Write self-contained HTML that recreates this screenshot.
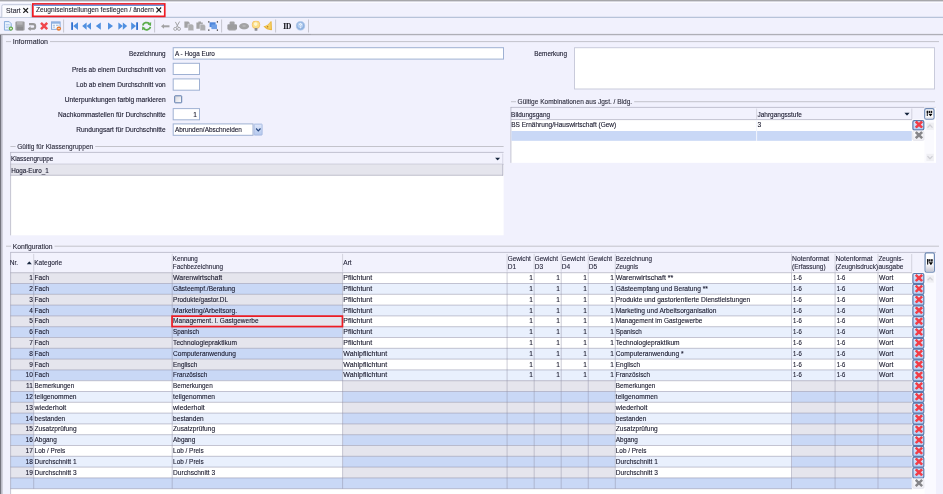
<!DOCTYPE html>
<html lang="de"><head><meta charset="utf-8"><title>Zeugniseinstellungen festlegen / ändern</title><style>
html,body{margin:0;padding:0;}
body{width:943px;height:494px;overflow:hidden;background:#f1f1fd;position:relative;font-family:"Liberation Sans",sans-serif;}
#r{position:absolute;left:0;top:0;width:943px;height:494px;overflow:hidden;}
#g{position:absolute;left:0;top:0;display:block;}
.L{position:absolute;left:0;top:0;width:943px;height:494px;will-change:transform;}
.t{position:absolute;white-space:nowrap;line-height:10px;height:10px;font-size:7.9px;color:#16162a;transform-origin:0 50%;-webkit-text-stroke:0.12px currentColor;}
.r{width:300px;text-align:right;transform-origin:100% 50%;}
</style></head><body><div id="r">
<svg id="g" width="943" height="494" viewBox="0 0 943 494"><defs><linearGradient id="g0" x1="0" y1="0" x2="1" y2="1"><stop offset="0" stop-color="#d4d4dc"/><stop offset="1" stop-color="#ffffff"/></linearGradient><linearGradient id="g1" x1="0" y1="0" x2="0" y2="1"><stop offset="0" stop-color="#dfe8fb"/><stop offset="1" stop-color="#b4c8ee"/></linearGradient><linearGradient id="g2" x1="0" y1="0" x2="0" y2="1"><stop offset="0" stop-color="#ffffff"/><stop offset="1" stop-color="#ffffff"/></linearGradient><linearGradient id="g3" x1="0" y1="0" x2="0" y2="1"><stop offset="0" stop-color="#f6f6fa"/><stop offset="1" stop-color="#dcdde6"/></linearGradient><linearGradient id="g4" x1="0" y1="0" x2="0" y2="1"><stop offset="0" stop-color="#dcebfd"/><stop offset="1" stop-color="#b4cef4"/></linearGradient><linearGradient id="g5" x1="0" y1="0" x2="0" y2="1"><stop offset="0" stop-color="#ffffff"/><stop offset="1" stop-color="#ededf3"/></linearGradient><linearGradient id="g6" x1="0" y1="0" x2="0" y2="1"><stop offset="0" stop-color="#f4f4f8"/><stop offset="1" stop-color="#c6c7d3"/></linearGradient></defs>
<rect x="0" y="0" width="943" height="1.2" fill="#a6a6aa"/>
<rect x="0" y="1.2" width="943" height="0.6" fill="#c4c4cc"/>
<rect x="0" y="1.8" width="943" height="1.2" fill="#fafaff"/>
<rect x="0" y="16.8" width="943" height="1" fill="#a9b7d0"/>
<path d="M1.8 17.3V6.3Q1.8 4.7 3.4 4.7H31.3V17.3" fill="#fbfbfe" stroke="#c0c7d9" stroke-width="1"/>
<svg x="22.7" y="7.4" width="6" height="6" viewBox="0 0 6 6"><path d="M0.6 0.6L5.4 5.4M5.4 0.6L0.6 5.4" stroke="#1c1c1c" stroke-width="1.15" fill="none"/></svg>
<rect x="32.85" y="3.95" width="131.9" height="12.4" fill="#ffffff" stroke="#ee1c24" stroke-width="1.7"/>
<rect x="33.6" y="4.7" width="130.4" height="1.2" fill="#5a88da"/>
<svg x="155.8" y="6.9" width="6" height="6" viewBox="0 0 6 6"><path d="M0.6 0.6L5.4 5.4M5.4 0.6L0.6 5.4" stroke="#1c1c1c" stroke-width="1.15" fill="none"/></svg>
<rect x="0" y="33.9" width="311" height="1" fill="#96969e"/>
<rect x="311" y="33.9" width="632" height="1" fill="#a2a2aa"/>
<rect x="0" y="34.9" width="943" height="0.8" fill="#dcdce6"/>
<rect x="63.1" y="19.5" width="1" height="13" fill="#c6c6d0"/>
<rect x="154.1" y="19.5" width="1" height="13" fill="#c6c6d0"/>
<rect x="221.1" y="19.5" width="1" height="13" fill="#c6c6d0"/>
<rect x="275.1" y="19.5" width="1" height="13" fill="#c6c6d0"/>
<rect x="308" y="19.5" width="1" height="13" fill="#c6c6d0"/>
<rect x="0" y="35" width="1.4" height="459" fill="#74747e"/>
<rect x="1.4" y="35" width="1.2" height="459" fill="#b9b9c6"/>
<svg x="3.60" y="21.10" width="10" height="10" viewBox="0 0 10 10"><path d="M0.8 0.5H5.6L7.6 2.6V9H0.8Z" fill="#e9f2fd" stroke="#7aa3d8" stroke-width="0.9"/><path d="M2.2 3.4H6M2.2 5H6M2.2 6.4H5" stroke="#a9c6ec" stroke-width="0.7"/><circle cx="7.3" cy="7.5" r="2.1" fill="#5aa53c"/><path d="M6.2 7.5H8.4M7.3 6.4V8.6" stroke="#fff" stroke-width="0.7"/></svg>
<svg x="15.00" y="21.10" width="10" height="10" viewBox="0 0 10 10"><rect x="0.4" y="0.4" width="9.2" height="9" rx="1" fill="#9c9c9e"/><rect x="2" y="0.6" width="5.6" height="3" fill="#b4b4b6"/><rect x="2" y="5.6" width="6" height="3.6" fill="#8c8c8e"/></svg>
<svg x="27.60" y="21.90" width="9" height="9" viewBox="0 0 9 9"><path d="M1.4 2.2H5.4A2.3 2.3 0 0 1 5.4 6.8H2" fill="none" stroke="#98989a" stroke-width="2.1"/><path d="M0 6.8L3 4.4V9Z" fill="#98989a"/></svg>
<svg x="39.80" y="21.70" width="8.6" height="8.6" viewBox="0 0 8.6 8.6"><path d="M1.2 1.2L7.4 7.4M7.4 1.2L1.2 7.4" stroke="#f0464d" stroke-width="2.5"/></svg>
<svg x="51.00" y="21.10" width="10.4" height="10" viewBox="0 0 10.4 10"><rect x="0.5" y="0.8" width="8.6" height="7.4" fill="#f4f8fe" stroke="#7fa4d8" stroke-width="0.9"/><rect x="0.5" y="0.8" width="8.6" height="1.8" fill="#8fb2e2"/><path d="M1.8 4.2H4M5 4.2H7.6M1.8 6H4" stroke="#8fa8cc" stroke-width="0.8"/><circle cx="7.8" cy="7.5" r="2.2" fill="#e8772a"/><path d="M6.7 7.5H8.9" stroke="#fff" stroke-width="0.7"/></svg>
<svg x="71.00" y="21.90" width="8" height="8.4" viewBox="0 0 8 8.4"><rect x="0.2" y="0.4" width="1.8" height="7.6" fill="#2f6fcf"/><path d="M7 0.4V8L2.2 4.2Z" fill="#4f8fe0"/></svg>
<svg x="82.00" y="21.90" width="10" height="8.4" viewBox="0 0 10 8.4"><path d="M4.6 0.6V7.8L0.2 4.2Z" fill="#4f8fe0"/><path d="M9 0.6V7.8L4.6 4.2Z" fill="#4f8fe0"/></svg>
<svg x="95.40" y="21.90" width="6" height="8.4" viewBox="0 0 6 8.4"><path d="M5.4 0.6V7.8L0.4 4.2Z" fill="#4f8fe0"/></svg>
<svg x="107.60" y="21.90" width="6" height="8.4" viewBox="0 0 6 8.4"><path d="M0.4 0.6V7.8L5.4 4.2Z" fill="#4f8fe0"/></svg>
<svg x="117.80" y="21.90" width="10" height="8.4" viewBox="0 0 10 8.4"><path d="M0.6 0.6V7.8L5 4.2Z" fill="#4f8fe0"/><path d="M5 0.6V7.8L9.4 4.2Z" fill="#4f8fe0"/></svg>
<svg x="130.80" y="21.90" width="8" height="8.4" viewBox="0 0 8 8.4"><rect x="5.4" y="0.4" width="1.8" height="7.6" fill="#2f6fcf"/><path d="M0.4 0.4V8L5.2 4.2Z" fill="#4f8fe0"/></svg>
<svg x="141.40" y="21.10" width="10.4" height="10" viewBox="0 0 10.4 10"><path d="M1.4 4.4A3.8 3.4 0 0 1 8 2.6" fill="none" stroke="#5cad4c" stroke-width="1.8"/><path d="M9.8 1L9.6 4.8L6.2 3.4Z" fill="#5cad4c"/><path d="M9 5.8A3.8 3.4 0 0 1 2.4 7.6" fill="none" stroke="#5cad4c" stroke-width="1.8"/><path d="M0.6 9.2L0.8 5.4L4.2 6.8Z" fill="#5cad4c"/></svg>
<svg x="160.80" y="23.30" width="9" height="6" viewBox="0 0 9 6"><path d="M0.2 3L3.2 0.6V5.4Z" fill="#a2a2a4"/><rect x="2.6" y="2" width="6.2" height="2" fill="#a2a2a4"/></svg>
<svg x="173.00" y="21.10" width="8.4" height="10" viewBox="0 0 8.4 10"><path d="M6.6 0.4L3.2 6.4M2.4 0.8L5.4 6.4" stroke="#a2a2a4" stroke-width="1" fill="none"/><circle cx="2.2" cy="7.8" r="1.5" fill="none" stroke="#a2a2a4" stroke-width="0.9"/><circle cx="6" cy="7.8" r="1.5" fill="none" stroke="#a2a2a4" stroke-width="0.9"/></svg>
<svg x="184.00" y="21.10" width="10.4" height="10" viewBox="0 0 10.4 10"><path d="M0.4 0.4H4.4L5.8 1.8V6.6H0.4Z" fill="#a2a2a4"/><path d="M4 3H8.2L9.8 4.6V9.6H4Z" fill="#aeaeb0" stroke="#f0f0fc" stroke-width="0.5"/></svg>
<svg x="196.00" y="21.10" width="10.4" height="10" viewBox="0 0 10.4 10"><path d="M0.4 1.4H2.4V0.4H5V1.4H6.8V7.6H0.4Z" fill="#a2a2a4"/><path d="M4 3.2H8L9.6 4.8V9.6H4Z" fill="#aeaeb0" stroke="#f0f0fc" stroke-width="0.5"/></svg>
<svg x="208.00" y="21.10" width="10.4" height="10" viewBox="0 0 10.4 10"><rect x="1.6" y="1.2" width="6" height="4.8" fill="#4d86dc"/><rect x="3.4" y="3.4" width="5.6" height="4.6" fill="#6f9fe6"/><rect x="0.2" y="0.2" width="1.2" height="1.2" fill="#222"/><rect x="8.8" y="0.2" width="1.2" height="1.2" fill="#222"/><rect x="0.2" y="8.4" width="1.2" height="1.2" fill="#222"/><rect x="8.8" y="8.4" width="1.2" height="1.2" fill="#222"/></svg>
<svg x="227.00" y="21.10" width="10.4" height="10" viewBox="0 0 10.4 10"><rect x="2.6" y="0.4" width="5" height="3.6" rx="1" fill="#a2a2a4"/><rect x="0.4" y="3.2" width="9.6" height="5.4" rx="1.2" fill="#9c9c9e"/><rect x="1.6" y="7.6" width="7" height="1.8" fill="#a2a2a4"/></svg>
<svg x="239.00" y="22.70" width="10.4" height="7" viewBox="0 0 10.4 7"><ellipse cx="5.1" cy="3.5" rx="4.9" ry="3.2" fill="#a2a2a4"/><ellipse cx="5.1" cy="3.2" rx="1.8" ry="1.1" fill="#b4b4b6"/></svg>
<svg x="251.40" y="20.70" width="9.4" height="10.4" viewBox="0 0 9.4 10.4"><circle cx="4.6" cy="4" r="3.9" fill="#fbe08a" stroke="#f3b75a" stroke-width="0.7"/><circle cx="4.3" cy="3.4" r="1.8" fill="#fff6d2"/><rect x="3.2" y="7.4" width="2.8" height="2.6" rx="0.5" fill="#8e8e92"/></svg>
<svg x="263.00" y="20.70" width="9.6" height="10.4" viewBox="0 0 9.6 10.4"><path d="M8.6 0.6L9 9.4Q4 9.8 0.4 5.6Q5.2 4.8 7.4 0.8Z" fill="#eab53c"/><path d="M7.6 1.6L7.8 8.4Q4.6 8.2 2.2 5.8Q5.6 4.6 7.6 1.6Z" fill="#f5d268"/><circle cx="4.6" cy="6" r="0.8" fill="#b87a1c"/></svg>
<svg x="295.80" y="21.10" width="9.6" height="9.6" viewBox="0 0 9.6 9.6"><circle cx="4.7" cy="4.7" r="4.4" fill="#8fb1e0" stroke="#b4cbea" stroke-width="0.8"/><circle cx="4.5" cy="4.2" r="2.8" fill="#b6cff0"/><path d="M3.6 3.6Q3.7 2.4 4.8 2.5Q5.9 2.7 5.5 3.8Q4.7 4.4 4.7 5.2" stroke="#fff" stroke-width="0.9" fill="none"/><circle cx="4.7" cy="6.6" r="0.55" fill="#fff"/></svg>
<rect x="6" y="41.1" width="5.1" height="1" fill="#c3c3cb"/>
<rect x="50" y="41.1" width="889" height="1" fill="#c3c3cb"/>
<rect x="10.4" y="146" width="5.2" height="1" fill="#c3c3cb"/>
<rect x="95.2" y="146" width="408.4" height="1" fill="#c3c3cb"/>
<rect x="511" y="101.2" width="5" height="1" fill="#c3c3cb"/>
<rect x="634.2" y="101.2" width="300.8" height="1" fill="#c3c3cb"/>
<rect x="6" y="245.7" width="5.1" height="1" fill="#c3c3cb"/>
<rect x="54.5" y="245.7" width="884.5" height="1" fill="#c3c3cb"/>
<rect x="173.2" y="47.7" width="330.3" height="11.4" fill="#ffffff" stroke="#9fb1d3" stroke-width="1"/>
<rect x="173.2" y="63.3" width="26.3" height="11.2" fill="#ffffff" stroke="#9fb1d3" stroke-width="1"/>
<rect x="173.2" y="78.9" width="26.3" height="11.3" fill="#ffffff" stroke="#9fb1d3" stroke-width="1"/>
<rect x="174.7" y="95.8" width="7" height="7" fill="url(#g0)" stroke="#5d7bab" stroke-width="1" rx="0.5"/>
<rect x="173.2" y="108.6" width="26.3" height="11.2" fill="#ffffff" stroke="#9fb1d3" stroke-width="1"/>
<rect x="173.2" y="123.9" width="79.8" height="11.4" fill="#ffffff" stroke="#9fb1d3" stroke-width="1"/>
<rect x="254.1" y="124.1" width="8" height="11" fill="url(#g1)" stroke="#a9bce2" stroke-width="1" rx="0.5"/>
<svg x="255.3" y="127.6" width="6" height="4.4" viewBox="0 0 6 4.4"><path d="M0.8 0.9L3 3.2L5.2 0.9" stroke="#27477f" stroke-width="1.2" fill="none"/></svg>
<rect x="574.5" y="47.7" width="360" height="41.3" fill="#ffffff" stroke="#c9cbdb" stroke-width="1"/>
<rect x="10.4" y="152.2" width="493.2" height="83.1" fill="#ffffff"/>
<rect x="10.4" y="152.2" width="493.2" height="12" fill="#f2f2fd"/>
<rect x="10.4" y="151.9" width="493.2" height="1" fill="rgba(141,141,165,0.5)"/>
<rect x="10.4" y="163.7" width="493.2" height="1" fill="rgba(141,141,165,0.5)"/>
<rect x="10.4" y="164.7" width="492.6" height="10.5" fill="#e5e5ed"/>
<rect x="10.4" y="174.8" width="492.6" height="1" fill="rgba(141,141,165,0.5)"/>
<rect x="10.1" y="152.2" width="1" height="83.1" fill="rgba(141,141,165,0.5)"/>
<rect x="502.3" y="153.5" width="1" height="10" fill="rgba(141,141,165,0.3)"/>
<rect x="502.3" y="164.2" width="1" height="11.4" fill="rgba(141,141,165,0.5)"/>
<svg x="494.9" y="157.5" width="5.4" height="3" viewBox="0 0 5.4 3"><path d="M0 0H5.4L2.7 3Z" fill="#182840"/></svg>
<rect x="510.6" y="107.2" width="425.4" height="55.6" fill="#ffffff"/>
<rect x="510.6" y="107.2" width="401.4" height="12.3" fill="#f2f2fd"/>
<rect x="912" y="107.2" width="23" height="12.3" fill="#f2f2fd"/>
<rect x="510.6" y="106.9" width="413.4" height="1" fill="rgba(141,141,165,0.5)"/>
<rect x="924" y="106.9" width="12" height="1" fill="rgba(141,141,165,0.2)"/>
<rect x="511" y="119.1" width="401" height="1" fill="rgba(141,141,165,0.5)"/>
<rect x="510.4" y="107.2" width="1" height="55.6" fill="rgba(141,141,165,0.5)"/>
<rect x="511.4" y="131" width="400.4" height="9.8" fill="#c9d8f6"/>
<rect x="756.1" y="108.6" width="1" height="10.4" fill="#d6d6e2"/>
<rect x="756.1" y="120.2" width="1" height="20.8" fill="#f2f5fd"/>
<rect x="911.3" y="108.5" width="1" height="10.5" fill="#d2d2de"/>
<svg x="904.2" y="112.6" width="5.6" height="3.2" viewBox="0 0 5.6 3.2"><path d="M0 0H5.6L2.8 3.2Z" fill="#14243c"/></svg>
<rect x="924.4" y="120" width="9.6" height="42.6" fill="#fafafe"/>
<rect x="926.4" y="122.7" width="7.4" height="7.2" fill="#efeff3"/>
<svg x="927.00" y="124.00" width="6" height="4.6" viewBox="0 0 6 4.6"><path d="M0.5 3.6L3 1L5.5 3.6" stroke="#d0d0d6" stroke-width="1.3" fill="none"/></svg>
<rect x="926.4" y="153.8" width="7.4" height="7.2" fill="#efeff3"/>
<svg x="927.00" y="155.10" width="6" height="4.6" viewBox="0 0 6 4.6"><path d="M0.5 1L3 3.6L5.5 1" stroke="#d0d0d6" stroke-width="1.3" fill="none"/></svg>
<rect x="924.7" y="108.6" width="9.3" height="10.6" fill="url(#g2)" stroke="#6f8ab5" stroke-width="1.2" rx="1.6"/>
<rect x="925.4" y="116.5" width="7.9" height="2" fill="url(#g3)"/>
<svg x="926.45" y="110.40" width="6.2" height="6.2" viewBox="0 0 6.2 6.2"><rect x="0.1" y="0.2" width="1.3" height="5.4" fill="#202024"/><rect x="0.1" y="0.2" width="1.6" height="2.4" fill="#101014"/><rect x="2.2" y="0.2" width="1.5" height="2.4" fill="#101014"/><rect x="4.2" y="0.2" width="1.7" height="2.4" fill="#101014"/><path d="M1.9 3.3H6.2L4.05 6.2Z" fill="#000"/></svg>
<rect x="912.9" y="120.6" width="10.9" height="9.2" fill="url(#g4)" stroke="#5c7aac" stroke-width="1.2" rx="1.3"/>
<svg x="914.85" y="120.70" width="8.2" height="7.8" viewBox="0 0 8.2 7.8"><path d="M0.9 0.8L7.3 7M7.3 0.8L0.9 7" stroke="#f23d47" stroke-width="2.5" fill="none"/></svg>
<rect x="912.8" y="131.1" width="11.1" height="9.2" fill="url(#g5)" stroke="#e4e4ec" stroke-width="1" rx="1"/>
<svg x="914.85" y="131.20" width="8.2" height="7.8" viewBox="0 0 8.2 7.8"><path d="M0.9 0.8L7.3 7M7.3 0.8L0.9 7" stroke="#868689" stroke-width="2.5" fill="none"/></svg>
<rect x="10.4" y="252.3" width="925.6" height="241.7" fill="#ffffff"/>
<rect x="10.4" y="252.3" width="901.3" height="20.4" fill="#f2f2fd"/>
<rect x="911.7" y="252.3" width="24.3" height="20.4" fill="#f2f2fd"/>
<rect x="924.6" y="272.7" width="11.4" height="221.3" fill="#fafaff"/>
<rect x="10.4" y="272.7" width="332.2" height="10.8" fill="#e5e5ed"/>
<rect x="342.6" y="272.7" width="569.1" height="10.8" fill="#ffffff"/>
<rect x="10.4" y="283.5" width="332.2" height="10.8" fill="#c9d8f6"/>
<rect x="342.6" y="283.5" width="569.1" height="10.8" fill="#e9f0fd"/>
<rect x="10.4" y="294.3" width="332.2" height="10.8" fill="#e5e5ed"/>
<rect x="342.6" y="294.3" width="569.1" height="10.8" fill="#ffffff"/>
<rect x="10.4" y="305.1" width="332.2" height="10.8" fill="#c9d8f6"/>
<rect x="342.6" y="305.1" width="569.1" height="10.8" fill="#e9f0fd"/>
<rect x="10.4" y="315.9" width="332.2" height="10.8" fill="#e5e5ed"/>
<rect x="342.6" y="315.9" width="569.1" height="10.8" fill="#ffffff"/>
<rect x="10.4" y="326.7" width="332.2" height="10.8" fill="#c9d8f6"/>
<rect x="342.6" y="326.7" width="569.1" height="10.8" fill="#e9f0fd"/>
<rect x="10.4" y="337.5" width="332.2" height="10.8" fill="#e5e5ed"/>
<rect x="342.6" y="337.5" width="569.1" height="10.8" fill="#ffffff"/>
<rect x="10.4" y="348.3" width="332.2" height="10.8" fill="#c9d8f6"/>
<rect x="342.6" y="348.3" width="569.1" height="10.8" fill="#e9f0fd"/>
<rect x="10.4" y="359.1" width="332.2" height="10.8" fill="#e5e5ed"/>
<rect x="342.6" y="359.1" width="569.1" height="10.8" fill="#ffffff"/>
<rect x="10.4" y="369.9" width="332.2" height="10.8" fill="#c9d8f6"/>
<rect x="342.6" y="369.9" width="569.1" height="10.8" fill="#e9f0fd"/>
<rect x="10.4" y="380.7" width="23.3" height="10.8" fill="#e5e5ed"/>
<rect x="33.7" y="380.7" width="308.9" height="10.8" fill="#ffffff"/>
<rect x="342.6" y="380.7" width="272.7" height="10.8" fill="#e5e5ed"/>
<rect x="615.3" y="380.7" width="176.2" height="10.8" fill="#ffffff"/>
<rect x="791.5" y="380.7" width="120.2" height="10.8" fill="#e5e5ed"/>
<rect x="10.4" y="391.5" width="23.3" height="10.8" fill="#c9d8f6"/>
<rect x="33.7" y="391.5" width="308.9" height="10.8" fill="#e9f0fd"/>
<rect x="342.6" y="391.5" width="272.7" height="10.8" fill="#c9d8f6"/>
<rect x="615.3" y="391.5" width="176.2" height="10.8" fill="#e9f0fd"/>
<rect x="791.5" y="391.5" width="120.2" height="10.8" fill="#c9d8f6"/>
<rect x="10.4" y="402.3" width="23.3" height="10.8" fill="#e5e5ed"/>
<rect x="33.7" y="402.3" width="308.9" height="10.8" fill="#ffffff"/>
<rect x="342.6" y="402.3" width="272.7" height="10.8" fill="#e5e5ed"/>
<rect x="615.3" y="402.3" width="176.2" height="10.8" fill="#ffffff"/>
<rect x="791.5" y="402.3" width="120.2" height="10.8" fill="#e5e5ed"/>
<rect x="10.4" y="413.1" width="23.3" height="10.8" fill="#c9d8f6"/>
<rect x="33.7" y="413.1" width="308.9" height="10.8" fill="#e9f0fd"/>
<rect x="342.6" y="413.1" width="272.7" height="10.8" fill="#c9d8f6"/>
<rect x="615.3" y="413.1" width="176.2" height="10.8" fill="#e9f0fd"/>
<rect x="791.5" y="413.1" width="120.2" height="10.8" fill="#c9d8f6"/>
<rect x="10.4" y="423.9" width="23.3" height="10.8" fill="#e5e5ed"/>
<rect x="33.7" y="423.9" width="308.9" height="10.8" fill="#ffffff"/>
<rect x="342.6" y="423.9" width="272.7" height="10.8" fill="#e5e5ed"/>
<rect x="615.3" y="423.9" width="176.2" height="10.8" fill="#ffffff"/>
<rect x="791.5" y="423.9" width="120.2" height="10.8" fill="#e5e5ed"/>
<rect x="10.4" y="434.7" width="23.3" height="10.8" fill="#c9d8f6"/>
<rect x="33.7" y="434.7" width="308.9" height="10.8" fill="#e9f0fd"/>
<rect x="342.6" y="434.7" width="272.7" height="10.8" fill="#c9d8f6"/>
<rect x="615.3" y="434.7" width="176.2" height="10.8" fill="#e9f0fd"/>
<rect x="791.5" y="434.7" width="120.2" height="10.8" fill="#c9d8f6"/>
<rect x="10.4" y="445.5" width="23.3" height="10.8" fill="#e5e5ed"/>
<rect x="33.7" y="445.5" width="308.9" height="10.8" fill="#ffffff"/>
<rect x="342.6" y="445.5" width="272.7" height="10.8" fill="#e5e5ed"/>
<rect x="615.3" y="445.5" width="176.2" height="10.8" fill="#ffffff"/>
<rect x="791.5" y="445.5" width="120.2" height="10.8" fill="#e5e5ed"/>
<rect x="10.4" y="456.3" width="23.3" height="10.8" fill="#c9d8f6"/>
<rect x="33.7" y="456.3" width="308.9" height="10.8" fill="#e9f0fd"/>
<rect x="342.6" y="456.3" width="272.7" height="10.8" fill="#c9d8f6"/>
<rect x="615.3" y="456.3" width="176.2" height="10.8" fill="#e9f0fd"/>
<rect x="791.5" y="456.3" width="120.2" height="10.8" fill="#c9d8f6"/>
<rect x="10.4" y="467.1" width="23.3" height="10.8" fill="#e5e5ed"/>
<rect x="33.7" y="467.1" width="308.9" height="10.8" fill="#ffffff"/>
<rect x="342.6" y="467.1" width="272.7" height="10.8" fill="#e5e5ed"/>
<rect x="615.3" y="467.1" width="176.2" height="10.8" fill="#ffffff"/>
<rect x="791.5" y="467.1" width="120.2" height="10.8" fill="#e5e5ed"/>
<rect x="10.4" y="477.9" width="901.3" height="10.8" fill="#c9d8f6"/>
<rect x="10.4" y="251.9" width="925.6" height="1" fill="rgba(141,141,165,0.5)"/>
<rect x="10.4" y="272.2" width="901.7" height="1" fill="rgba(141,141,165,0.5)"/>
<rect x="10.4" y="283" width="901.7" height="1" fill="rgba(141,141,165,0.5)"/>
<rect x="10.4" y="293.8" width="901.7" height="1" fill="rgba(141,141,165,0.5)"/>
<rect x="10.4" y="304.6" width="901.7" height="1" fill="rgba(141,141,165,0.5)"/>
<rect x="10.4" y="315.4" width="901.7" height="1" fill="rgba(141,141,165,0.5)"/>
<rect x="10.4" y="326.2" width="901.7" height="1" fill="rgba(141,141,165,0.5)"/>
<rect x="10.4" y="337" width="901.7" height="1" fill="rgba(141,141,165,0.5)"/>
<rect x="10.4" y="347.8" width="901.7" height="1" fill="rgba(141,141,165,0.5)"/>
<rect x="10.4" y="358.6" width="901.7" height="1" fill="rgba(141,141,165,0.5)"/>
<rect x="10.4" y="369.4" width="901.7" height="1" fill="rgba(141,141,165,0.5)"/>
<rect x="10.4" y="380.2" width="901.7" height="1" fill="rgba(141,141,165,0.5)"/>
<rect x="10.4" y="391" width="901.7" height="1" fill="rgba(141,141,165,0.5)"/>
<rect x="10.4" y="401.8" width="901.7" height="1" fill="rgba(141,141,165,0.5)"/>
<rect x="10.4" y="412.6" width="901.7" height="1" fill="rgba(141,141,165,0.5)"/>
<rect x="10.4" y="423.4" width="901.7" height="1" fill="rgba(141,141,165,0.5)"/>
<rect x="10.4" y="434.2" width="901.7" height="1" fill="rgba(141,141,165,0.5)"/>
<rect x="10.4" y="445" width="901.7" height="1" fill="rgba(141,141,165,0.5)"/>
<rect x="10.4" y="455.8" width="901.7" height="1" fill="rgba(141,141,165,0.5)"/>
<rect x="10.4" y="466.6" width="901.7" height="1" fill="rgba(141,141,165,0.5)"/>
<rect x="10.4" y="477.4" width="901.7" height="1" fill="rgba(141,141,165,0.5)"/>
<rect x="10.4" y="488.2" width="901.7" height="1" fill="rgba(141,141,165,0.5)"/>
<rect x="10.1" y="252.3" width="1" height="241.7" fill="rgba(141,141,165,0.5)"/>
<rect x="33.2" y="272.7" width="1" height="216" fill="rgba(141,141,165,0.44)"/>
<rect x="33.2" y="253.9" width="1" height="17.8" fill="#d3d3de"/>
<rect x="171.7" y="272.7" width="1" height="216" fill="rgba(141,141,165,0.44)"/>
<rect x="171.7" y="253.9" width="1" height="17.8" fill="#d3d3de"/>
<rect x="342.1" y="272.7" width="1" height="216" fill="rgba(141,141,165,0.44)"/>
<rect x="342.1" y="253.9" width="1" height="17.8" fill="#d3d3de"/>
<rect x="506.6" y="272.7" width="1" height="216" fill="rgba(141,141,165,0.44)"/>
<rect x="506.6" y="253.9" width="1" height="17.8" fill="#d3d3de"/>
<rect x="533.65" y="272.7" width="1" height="216" fill="rgba(141,141,165,0.44)"/>
<rect x="533.65" y="253.9" width="1" height="17.8" fill="#d3d3de"/>
<rect x="560.7" y="272.7" width="1" height="216" fill="rgba(141,141,165,0.44)"/>
<rect x="560.7" y="253.9" width="1" height="17.8" fill="#d3d3de"/>
<rect x="587.75" y="272.7" width="1" height="216" fill="rgba(141,141,165,0.44)"/>
<rect x="587.75" y="253.9" width="1" height="17.8" fill="#d3d3de"/>
<rect x="614.8" y="272.7" width="1" height="216" fill="rgba(141,141,165,0.44)"/>
<rect x="614.8" y="253.9" width="1" height="17.8" fill="#d3d3de"/>
<rect x="791" y="272.7" width="1" height="216" fill="rgba(141,141,165,0.44)"/>
<rect x="791" y="253.9" width="1" height="17.8" fill="#d3d3de"/>
<rect x="834.6" y="272.7" width="1" height="216" fill="rgba(141,141,165,0.44)"/>
<rect x="834.6" y="253.9" width="1" height="17.8" fill="#d3d3de"/>
<rect x="877.5" y="272.7" width="1" height="216" fill="rgba(141,141,165,0.44)"/>
<rect x="877.5" y="253.9" width="1" height="17.8" fill="#d3d3de"/>
<rect x="911.2" y="253.9" width="1" height="17.8" fill="#d3d3de"/>
<svg x="26.6" y="261.3" width="5.4" height="3.2" viewBox="0 0 5.4 3.2"><path d="M0 3.2H5.4L2.7 0Z" fill="#16263e"/></svg>
<rect x="912.9" y="273.5" width="10.9" height="10.1" fill="url(#g4)" stroke="#5c7aac" stroke-width="1.2" rx="1.3"/>
<svg x="914.85" y="274.05" width="8.2" height="7.8" viewBox="0 0 8.2 7.8"><path d="M0.9 0.8L7.3 7M7.3 0.8L0.9 7" stroke="#f23d47" stroke-width="2.5" fill="none"/></svg>
<rect x="912.9" y="284.3" width="10.9" height="10.1" fill="url(#g4)" stroke="#5c7aac" stroke-width="1.2" rx="1.3"/>
<svg x="914.85" y="284.85" width="8.2" height="7.8" viewBox="0 0 8.2 7.8"><path d="M0.9 0.8L7.3 7M7.3 0.8L0.9 7" stroke="#f23d47" stroke-width="2.5" fill="none"/></svg>
<rect x="912.9" y="295.1" width="10.9" height="10.1" fill="url(#g4)" stroke="#5c7aac" stroke-width="1.2" rx="1.3"/>
<svg x="914.85" y="295.65" width="8.2" height="7.8" viewBox="0 0 8.2 7.8"><path d="M0.9 0.8L7.3 7M7.3 0.8L0.9 7" stroke="#f23d47" stroke-width="2.5" fill="none"/></svg>
<rect x="912.9" y="305.9" width="10.9" height="10.1" fill="url(#g4)" stroke="#5c7aac" stroke-width="1.2" rx="1.3"/>
<svg x="914.85" y="306.45" width="8.2" height="7.8" viewBox="0 0 8.2 7.8"><path d="M0.9 0.8L7.3 7M7.3 0.8L0.9 7" stroke="#f23d47" stroke-width="2.5" fill="none"/></svg>
<rect x="912.9" y="316.7" width="10.9" height="10.1" fill="url(#g4)" stroke="#5c7aac" stroke-width="1.2" rx="1.3"/>
<svg x="914.85" y="317.25" width="8.2" height="7.8" viewBox="0 0 8.2 7.8"><path d="M0.9 0.8L7.3 7M7.3 0.8L0.9 7" stroke="#f23d47" stroke-width="2.5" fill="none"/></svg>
<rect x="912.9" y="327.5" width="10.9" height="10.1" fill="url(#g4)" stroke="#5c7aac" stroke-width="1.2" rx="1.3"/>
<svg x="914.85" y="328.05" width="8.2" height="7.8" viewBox="0 0 8.2 7.8"><path d="M0.9 0.8L7.3 7M7.3 0.8L0.9 7" stroke="#f23d47" stroke-width="2.5" fill="none"/></svg>
<rect x="912.9" y="338.3" width="10.9" height="10.1" fill="url(#g4)" stroke="#5c7aac" stroke-width="1.2" rx="1.3"/>
<svg x="914.85" y="338.85" width="8.2" height="7.8" viewBox="0 0 8.2 7.8"><path d="M0.9 0.8L7.3 7M7.3 0.8L0.9 7" stroke="#f23d47" stroke-width="2.5" fill="none"/></svg>
<rect x="912.9" y="349.1" width="10.9" height="10.1" fill="url(#g4)" stroke="#5c7aac" stroke-width="1.2" rx="1.3"/>
<svg x="914.85" y="349.65" width="8.2" height="7.8" viewBox="0 0 8.2 7.8"><path d="M0.9 0.8L7.3 7M7.3 0.8L0.9 7" stroke="#f23d47" stroke-width="2.5" fill="none"/></svg>
<rect x="912.9" y="359.9" width="10.9" height="10.1" fill="url(#g4)" stroke="#5c7aac" stroke-width="1.2" rx="1.3"/>
<svg x="914.85" y="360.45" width="8.2" height="7.8" viewBox="0 0 8.2 7.8"><path d="M0.9 0.8L7.3 7M7.3 0.8L0.9 7" stroke="#f23d47" stroke-width="2.5" fill="none"/></svg>
<rect x="912.9" y="370.7" width="10.9" height="10.1" fill="url(#g4)" stroke="#5c7aac" stroke-width="1.2" rx="1.3"/>
<svg x="914.85" y="371.25" width="8.2" height="7.8" viewBox="0 0 8.2 7.8"><path d="M0.9 0.8L7.3 7M7.3 0.8L0.9 7" stroke="#f23d47" stroke-width="2.5" fill="none"/></svg>
<rect x="912.9" y="381.5" width="10.9" height="10.1" fill="url(#g4)" stroke="#5c7aac" stroke-width="1.2" rx="1.3"/>
<svg x="914.85" y="382.05" width="8.2" height="7.8" viewBox="0 0 8.2 7.8"><path d="M0.9 0.8L7.3 7M7.3 0.8L0.9 7" stroke="#f23d47" stroke-width="2.5" fill="none"/></svg>
<rect x="912.9" y="392.3" width="10.9" height="10.1" fill="url(#g4)" stroke="#5c7aac" stroke-width="1.2" rx="1.3"/>
<svg x="914.85" y="392.85" width="8.2" height="7.8" viewBox="0 0 8.2 7.8"><path d="M0.9 0.8L7.3 7M7.3 0.8L0.9 7" stroke="#f23d47" stroke-width="2.5" fill="none"/></svg>
<rect x="912.9" y="403.1" width="10.9" height="10.1" fill="url(#g4)" stroke="#5c7aac" stroke-width="1.2" rx="1.3"/>
<svg x="914.85" y="403.65" width="8.2" height="7.8" viewBox="0 0 8.2 7.8"><path d="M0.9 0.8L7.3 7M7.3 0.8L0.9 7" stroke="#f23d47" stroke-width="2.5" fill="none"/></svg>
<rect x="912.9" y="413.9" width="10.9" height="10.1" fill="url(#g4)" stroke="#5c7aac" stroke-width="1.2" rx="1.3"/>
<svg x="914.85" y="414.45" width="8.2" height="7.8" viewBox="0 0 8.2 7.8"><path d="M0.9 0.8L7.3 7M7.3 0.8L0.9 7" stroke="#f23d47" stroke-width="2.5" fill="none"/></svg>
<rect x="912.9" y="424.7" width="10.9" height="10.1" fill="url(#g4)" stroke="#5c7aac" stroke-width="1.2" rx="1.3"/>
<svg x="914.85" y="425.25" width="8.2" height="7.8" viewBox="0 0 8.2 7.8"><path d="M0.9 0.8L7.3 7M7.3 0.8L0.9 7" stroke="#f23d47" stroke-width="2.5" fill="none"/></svg>
<rect x="912.9" y="435.5" width="10.9" height="10.1" fill="url(#g4)" stroke="#5c7aac" stroke-width="1.2" rx="1.3"/>
<svg x="914.85" y="436.05" width="8.2" height="7.8" viewBox="0 0 8.2 7.8"><path d="M0.9 0.8L7.3 7M7.3 0.8L0.9 7" stroke="#f23d47" stroke-width="2.5" fill="none"/></svg>
<rect x="912.9" y="446.3" width="10.9" height="10.1" fill="url(#g4)" stroke="#5c7aac" stroke-width="1.2" rx="1.3"/>
<svg x="914.85" y="446.85" width="8.2" height="7.8" viewBox="0 0 8.2 7.8"><path d="M0.9 0.8L7.3 7M7.3 0.8L0.9 7" stroke="#f23d47" stroke-width="2.5" fill="none"/></svg>
<rect x="912.9" y="457.1" width="10.9" height="10.1" fill="url(#g4)" stroke="#5c7aac" stroke-width="1.2" rx="1.3"/>
<svg x="914.85" y="457.65" width="8.2" height="7.8" viewBox="0 0 8.2 7.8"><path d="M0.9 0.8L7.3 7M7.3 0.8L0.9 7" stroke="#f23d47" stroke-width="2.5" fill="none"/></svg>
<rect x="912.9" y="467.9" width="10.9" height="10.1" fill="url(#g4)" stroke="#5c7aac" stroke-width="1.2" rx="1.3"/>
<svg x="914.85" y="468.45" width="8.2" height="7.8" viewBox="0 0 8.2 7.8"><path d="M0.9 0.8L7.3 7M7.3 0.8L0.9 7" stroke="#f23d47" stroke-width="2.5" fill="none"/></svg>
<rect x="912.8" y="478.9" width="11.1" height="9.4" fill="url(#g5)" stroke="#e4e4ec" stroke-width="1" rx="1"/>
<svg x="914.85" y="479.10" width="8.2" height="7.8" viewBox="0 0 8.2 7.8"><path d="M0.9 0.8L7.3 7M7.3 0.8L0.9 7" stroke="#868689" stroke-width="2.5" fill="none"/></svg>
<rect x="925.1" y="252.9" width="9.3" height="19.2" fill="url(#g2)" stroke="#6f8ab5" stroke-width="1.2" rx="1.6"/>
<rect x="925.8" y="264.95" width="7.9" height="6.45" fill="url(#g6)"/>
<svg x="926.85" y="259.00" width="6.2" height="6.2" viewBox="0 0 6.2 6.2"><rect x="0.1" y="0.2" width="1.3" height="5.4" fill="#202024"/><rect x="0.1" y="0.2" width="1.6" height="2.4" fill="#101014"/><rect x="2.2" y="0.2" width="1.5" height="2.4" fill="#101014"/><rect x="4.2" y="0.2" width="1.7" height="2.4" fill="#101014"/><path d="M1.9 3.3H6.2L4.05 6.2Z" fill="#000"/></svg>
<rect x="926.5" y="275.4" width="7.4" height="7.2" fill="#efeff3"/>
<svg x="927.10" y="276.70" width="6" height="4.6" viewBox="0 0 6 4.6"><path d="M0.5 3.6L3 1L5.5 3.6" stroke="#d0d0d6" stroke-width="1.3" fill="none"/></svg>
<rect x="172.05" y="316.15" width="170.4" height="10.4" fill="none" stroke="#ee1c24" stroke-width="1.7"/>
</svg>
<div class="L" style="transform:translate(0,0.25px)">
<span class="t" style="top:6px;color:#30303c;left:6px;transform:translate(0.1px,0) scaleX(0.882);">Start</span>
<span class="t" style="top:5px;color:#282834;left:35px;transform:translate(0.9px,0) scaleX(0.843);">Zeugniseinstellungen festlegen / ändern</span>
<span class="t" style="top:97px;color:#2a2a3a;left:517px;transform:translate(0.6px,0) scaleX(0.829);">Gültige Kombinationen aus Jgst. / Bldg.</span>
<span class="t" style="top:80px;left:76px;transform:translate(0.2px,0) scaleX(0.822);">Lob ab einem Durchschnitt von</span>
<span class="t" style="top:125px;left:76px;transform:translate(0.2px,0) scaleX(0.835);">Rundungsart für Durchschnitte</span>
<span class="t" style="top:125px;left:174px;transform:translate(0.9px,0) scaleX(0.817);">Abrunden/Abschneiden</span>
<span class="t" style="top:154px;left:10px;transform:translate(0.9px,0) scaleX(0.807);">Klassengruppe</span>
<span class="t" style="top:120px;left:511px;transform:translate(0.2px,0) scaleX(0.826);">BS Ernährung/Hauswirtschaft (Gew)</span>
<span class="t" style="top:120px;left:757px;transform:translate(0.6px,0) scaleX(0.830);">3</span>
<span class="t" style="top:258px;color:#26263a;left:9px;transform:translate(0.8px,0) scaleX(0.830);">Nr.</span>
<span class="t" style="top:258px;color:#26263a;left:34px;transform:translate(0.2px,0) scaleX(0.829);">Kategorie</span>
<span class="t" style="top:262px;color:#26263a;left:172px;transform:translate(0.8px,0) scaleX(0.806);">Fachbezeichnung</span>
<span class="t" style="top:258px;color:#26263a;left:343px;transform:translate(0.3px,0) scaleX(0.830);">Art</span>
<span class="t" style="top:262px;color:#26263a;left:507px;transform:translate(0.7px,0) scaleX(0.830);">D1</span>
<span class="t" style="top:262px;color:#26263a;left:534px;transform:translate(0.75px,0) scaleX(0.830);">D3</span>
<span class="t" style="top:262px;color:#26263a;left:561px;transform:translate(0.8px,0) scaleX(0.830);">D4</span>
<span class="t" style="top:262px;color:#26263a;left:588px;transform:translate(0.85px,0) scaleX(0.830);">D5</span>
<span class="t" style="top:262px;color:#26263a;left:615px;transform:translate(0.7px,0) scaleX(0.801);">Zeugnis</span>
<span class="t" style="top:262px;color:#26263a;left:792px;transform:translate(0px,0) scaleX(0.824);">(Erfassung)</span>
<span class="t" style="top:262px;color:#26263a;left:835px;transform:translate(0.4px,0) scaleX(0.810);">(Zeugnisdruck)</span>
<span class="t" style="top:262px;color:#26263a;left:878px;transform:translate(0.4px,0) scaleX(0.826);">ausgabe</span>
<span class="t r" style="top:273px;left:-268px;transform:translate(0.8px,0) scaleX(0.830);">1</span>
<span class="t" style="top:273px;left:34px;transform:translate(0.6px,0) scaleX(0.826);">Fach</span>
<span class="t" style="top:273px;left:173px;transform:translate(0.1px,0) scaleX(0.874);">Warenwirtschaft</span>
<span class="t" style="top:273px;left:343px;transform:translate(0.3px,0) scaleX(0.887);">Pflichtunt</span>
<span class="t r" style="top:273px;left:232px;transform:translate(0.85px,0) scaleX(0.830);">1</span>
<span class="t r" style="top:273px;left:259px;transform:translate(0.9px,0) scaleX(0.830);">1</span>
<span class="t r" style="top:273px;left:286px;transform:translate(0.95px,0) scaleX(0.830);">1</span>
<span class="t r" style="top:273px;left:314px;transform:translate(0px,0) scaleX(0.830);">1</span>
<span class="t" style="top:273px;left:793px;transform:translate(0.1px,0) scaleX(0.754);">1-6</span>
<span class="t" style="top:273px;left:836px;transform:translate(0.7px,0) scaleX(0.754);">1-6</span>
<span class="t" style="top:273px;left:879px;transform:translate(0.1px,0) scaleX(0.860);">Wort</span>
<span class="t" style="top:273px;left:615px;transform:translate(0.8px,0) scaleX(0.890);">Warenwirtschaft **</span>
<span class="t r" style="top:284px;left:-268px;transform:translate(0.8px,0) scaleX(0.830);">2</span>
<span class="t" style="top:284px;left:34px;transform:translate(0.6px,0) scaleX(0.826);">Fach</span>
<span class="t" style="top:284px;left:173px;transform:translate(0.1px,0) scaleX(0.828);">Gästeempf./Beratung</span>
<span class="t" style="top:284px;left:343px;transform:translate(0.3px,0) scaleX(0.887);">Pflichtunt</span>
<span class="t r" style="top:284px;left:232px;transform:translate(0.85px,0) scaleX(0.830);">1</span>
<span class="t r" style="top:284px;left:259px;transform:translate(0.9px,0) scaleX(0.830);">1</span>
<span class="t r" style="top:284px;left:286px;transform:translate(0.95px,0) scaleX(0.830);">1</span>
<span class="t r" style="top:284px;left:314px;transform:translate(0px,0) scaleX(0.830);">1</span>
<span class="t" style="top:284px;left:793px;transform:translate(0.1px,0) scaleX(0.754);">1-6</span>
<span class="t" style="top:284px;left:836px;transform:translate(0.7px,0) scaleX(0.754);">1-6</span>
<span class="t" style="top:284px;left:879px;transform:translate(0.1px,0) scaleX(0.860);">Wort</span>
<span class="t" style="top:284px;left:615px;transform:translate(0.8px,0) scaleX(0.840);">Gästeempfang und Beratung **</span>
<span class="t r" style="top:316px;left:-268px;transform:translate(0.8px,0) scaleX(0.830);">5</span>
<span class="t" style="top:316px;left:34px;transform:translate(0.6px,0) scaleX(0.826);">Fach</span>
<span class="t" style="top:316px;left:173px;transform:translate(0.1px,0) scaleX(0.826);">Management. i. Gastgewerbe</span>
<span class="t" style="top:316px;left:343px;transform:translate(0.3px,0) scaleX(0.887);">Pflichtunt</span>
<span class="t r" style="top:316px;left:232px;transform:translate(0.85px,0) scaleX(0.830);">1</span>
<span class="t r" style="top:316px;left:259px;transform:translate(0.9px,0) scaleX(0.830);">1</span>
<span class="t r" style="top:316px;left:286px;transform:translate(0.95px,0) scaleX(0.830);">1</span>
<span class="t r" style="top:316px;left:314px;transform:translate(0px,0) scaleX(0.830);">1</span>
<span class="t" style="top:316px;left:793px;transform:translate(0.1px,0) scaleX(0.754);">1-6</span>
<span class="t" style="top:316px;left:836px;transform:translate(0.7px,0) scaleX(0.754);">1-6</span>
<span class="t" style="top:316px;left:879px;transform:translate(0.1px,0) scaleX(0.860);">Wort</span>
<span class="t" style="top:316px;left:615px;transform:translate(0.8px,0) scaleX(0.820);">Management im Gastgewerbe</span>
<span class="t r" style="top:327px;left:-268px;transform:translate(0.8px,0) scaleX(0.830);">6</span>
<span class="t" style="top:327px;left:34px;transform:translate(0.6px,0) scaleX(0.826);">Fach</span>
<span class="t" style="top:327px;left:173px;transform:translate(0.1px,0) scaleX(0.801);">Spanisch</span>
<span class="t" style="top:327px;left:343px;transform:translate(0.3px,0) scaleX(0.887);">Pflichtunt</span>
<span class="t r" style="top:327px;left:232px;transform:translate(0.85px,0) scaleX(0.830);">1</span>
<span class="t r" style="top:327px;left:259px;transform:translate(0.9px,0) scaleX(0.830);">1</span>
<span class="t r" style="top:327px;left:286px;transform:translate(0.95px,0) scaleX(0.830);">1</span>
<span class="t r" style="top:327px;left:314px;transform:translate(0px,0) scaleX(0.830);">1</span>
<span class="t" style="top:327px;left:793px;transform:translate(0.1px,0) scaleX(0.754);">1-6</span>
<span class="t" style="top:327px;left:836px;transform:translate(0.7px,0) scaleX(0.754);">1-6</span>
<span class="t" style="top:327px;left:879px;transform:translate(0.1px,0) scaleX(0.860);">Wort</span>
<span class="t" style="top:327px;left:615px;transform:translate(0.8px,0) scaleX(0.801);">Spanisch</span>
<span class="t r" style="top:338px;left:-268px;transform:translate(0.8px,0) scaleX(0.830);">7</span>
<span class="t" style="top:338px;left:34px;transform:translate(0.6px,0) scaleX(0.826);">Fach</span>
<span class="t" style="top:338px;left:173px;transform:translate(0.1px,0) scaleX(0.836);">Technologiepraktikum</span>
<span class="t" style="top:338px;left:343px;transform:translate(0.3px,0) scaleX(0.887);">Pflichtunt</span>
<span class="t r" style="top:338px;left:232px;transform:translate(0.85px,0) scaleX(0.830);">1</span>
<span class="t r" style="top:338px;left:259px;transform:translate(0.9px,0) scaleX(0.830);">1</span>
<span class="t r" style="top:338px;left:286px;transform:translate(0.95px,0) scaleX(0.830);">1</span>
<span class="t r" style="top:338px;left:314px;transform:translate(0px,0) scaleX(0.830);">1</span>
<span class="t" style="top:338px;left:793px;transform:translate(0.1px,0) scaleX(0.754);">1-6</span>
<span class="t" style="top:338px;left:836px;transform:translate(0.7px,0) scaleX(0.754);">1-6</span>
<span class="t" style="top:338px;left:879px;transform:translate(0.1px,0) scaleX(0.860);">Wort</span>
<span class="t" style="top:338px;left:615px;transform:translate(0.8px,0) scaleX(0.836);">Technologiepraktikum</span>
<span class="t r" style="top:370px;left:-268px;transform:translate(0.8px,0) scaleX(0.830);">10</span>
<span class="t" style="top:370px;left:34px;transform:translate(0.6px,0) scaleX(0.826);">Fach</span>
<span class="t" style="top:370px;left:173px;transform:translate(0.1px,0) scaleX(0.804);">Französisch</span>
<span class="t" style="top:370px;left:343px;transform:translate(0.3px,0) scaleX(0.889);">Wahlpflichtunt</span>
<span class="t r" style="top:370px;left:232px;transform:translate(0.85px,0) scaleX(0.830);">1</span>
<span class="t r" style="top:370px;left:259px;transform:translate(0.9px,0) scaleX(0.830);">1</span>
<span class="t r" style="top:370px;left:286px;transform:translate(0.95px,0) scaleX(0.830);">1</span>
<span class="t r" style="top:370px;left:314px;transform:translate(0px,0) scaleX(0.830);">1</span>
<span class="t" style="top:370px;left:793px;transform:translate(0.1px,0) scaleX(0.754);">1-6</span>
<span class="t" style="top:370px;left:836px;transform:translate(0.7px,0) scaleX(0.754);">1-6</span>
<span class="t" style="top:370px;left:879px;transform:translate(0.1px,0) scaleX(0.860);">Wort</span>
<span class="t" style="top:370px;left:615px;transform:translate(0.8px,0) scaleX(0.804);">Französisch</span>
<span class="t r" style="top:381px;left:-268px;transform:translate(0.8px,0) scaleX(0.830);">11</span>
<span class="t" style="top:381px;left:34px;transform:translate(0.6px,0) scaleX(0.806);">Bemerkungen</span>
<span class="t" style="top:381px;left:173px;transform:translate(0.1px,0) scaleX(0.806);">Bemerkungen</span>
<span class="t" style="top:381px;left:615px;transform:translate(0.8px,0) scaleX(0.806);">Bemerkungen</span>
<span class="t r" style="top:392px;left:-268px;transform:translate(0.8px,0) scaleX(0.830);">12</span>
<span class="t" style="top:392px;left:34px;transform:translate(0.6px,0) scaleX(0.847);">teilgenommen</span>
<span class="t" style="top:392px;left:173px;transform:translate(0.1px,0) scaleX(0.847);">teilgenommen</span>
<span class="t" style="top:392px;left:615px;transform:translate(0.8px,0) scaleX(0.847);">teilgenommen</span>
<span class="t r" style="top:424px;left:-268px;transform:translate(0.8px,0) scaleX(0.830);">15</span>
<span class="t" style="top:424px;left:34px;transform:translate(0.6px,0) scaleX(0.832);">Zusatzprüfung</span>
<span class="t" style="top:424px;left:173px;transform:translate(0.1px,0) scaleX(0.832);">Zusatzprüfung</span>
<span class="t" style="top:424px;left:615px;transform:translate(0.8px,0) scaleX(0.832);">Zusatzprüfung</span>
<span class="t r" style="top:435px;left:-268px;transform:translate(0.8px,0) scaleX(0.830);">16</span>
<span class="t" style="top:435px;left:34px;transform:translate(0.6px,0) scaleX(0.812);">Abgang</span>
<span class="t" style="top:435px;left:173px;transform:translate(0.1px,0) scaleX(0.812);">Abgang</span>
<span class="t" style="top:435px;left:615px;transform:translate(0.8px,0) scaleX(0.812);">Abgang</span>
<span class="t r" style="top:446px;left:-268px;transform:translate(0.8px,0) scaleX(0.830);">17</span>
<span class="t" style="top:446px;left:34px;transform:translate(0.6px,0) scaleX(0.811);">Lob / Preis</span>
<span class="t" style="top:446px;left:173px;transform:translate(0.1px,0) scaleX(0.811);">Lob / Preis</span>
<span class="t" style="top:446px;left:615px;transform:translate(0.8px,0) scaleX(0.811);">Lob / Preis</span>
</div>
<div class="L" style="transform:translate(0,0.75px)">
<span class="t" style="top:21px;font-size:7.8px;color:#101018;left:283px;transform:translate(0.2px,0) scaleX(0.950);font-family:'Liberation Serif',serif;font-weight:bold;">ID</span>
<span class="t" style="top:36px;color:#2a2a3a;left:12px;transform:translate(0.7px,0) scaleX(0.894);">Information</span>
<span class="t" style="top:141px;color:#2a2a3a;left:17px;transform:translate(0.2px,0) scaleX(0.833);">Gültig für Klassengruppen</span>
<span class="t" style="top:241px;color:#2a2a3a;left:12px;transform:translate(0.7px,0) scaleX(0.856);">Konfiguration</span>
<span class="t" style="top:48px;left:128px;transform:translate(0.9px,0) scaleX(0.804);">Bezeichnung</span>
<span class="t" style="top:64px;left:72px;transform:translate(0px,0) scaleX(0.824);">Preis ab einem Durchschnitt von</span>
<span class="t" style="top:94px;left:64px;transform:translate(0.7px,0) scaleX(0.843);">Unterpunktungen farbig markieren</span>
<span class="t" style="top:109px;left:58px;transform:translate(0.1px,0) scaleX(0.834);">Nachkommastellen für Durchschnitte</span>
<span class="t" style="top:48px;left:174px;transform:translate(0.9px,0) scaleX(0.807);">A - Hoga Euro</span>
<span class="t r" style="top:109px;left:-104px;transform:translate(0.9px,0) scaleX(0.830);">1</span>
<span class="t" style="top:48px;left:534px;transform:translate(0.3px,0) scaleX(0.810);">Bemerkung</span>
<span class="t" style="top:165px;left:11px;transform:translate(0.2px,0) scaleX(0.799);">Hoga-Euro_1</span>
<span class="t" style="top:109px;left:511px;transform:translate(0.1px,0) scaleX(0.815);">Bildungsgang</span>
<span class="t" style="top:109px;left:757px;transform:translate(0.4px,0) scaleX(0.825);">Jahrgangsstufe</span>
<span class="t" style="top:253px;color:#26263a;left:172px;transform:translate(0.8px,0) scaleX(0.791);">Kennung</span>
<span class="t" style="top:253px;color:#26263a;left:507px;transform:translate(0.7px,0) scaleX(0.814);">Gewicht</span>
<span class="t" style="top:253px;color:#26263a;left:534px;transform:translate(0.75px,0) scaleX(0.814);">Gewicht</span>
<span class="t" style="top:253px;color:#26263a;left:561px;transform:translate(0.8px,0) scaleX(0.814);">Gewicht</span>
<span class="t" style="top:253px;color:#26263a;left:588px;transform:translate(0.85px,0) scaleX(0.814);">Gewicht</span>
<span class="t" style="top:253px;color:#26263a;left:615px;transform:translate(0.7px,0) scaleX(0.795);">Bezeichnung</span>
<span class="t" style="top:253px;color:#26263a;left:792px;transform:translate(0px,0) scaleX(0.857);">Notenformat</span>
<span class="t" style="top:253px;color:#26263a;left:835px;transform:translate(0.4px,0) scaleX(0.857);">Notenformat</span>
<span class="t" style="top:253px;color:#26263a;left:878px;transform:translate(0.4px,0) scaleX(0.821);">Zeugnis-</span>
<span class="t r" style="top:294px;left:-268px;transform:translate(0.8px,0) scaleX(0.830);">3</span>
<span class="t" style="top:294px;left:34px;transform:translate(0.6px,0) scaleX(0.826);">Fach</span>
<span class="t" style="top:294px;left:173px;transform:translate(0.1px,0) scaleX(0.814);">Produkte/gastor.DL</span>
<span class="t" style="top:294px;left:343px;transform:translate(0.3px,0) scaleX(0.887);">Pflichtunt</span>
<span class="t r" style="top:294px;left:232px;transform:translate(0.85px,0) scaleX(0.830);">1</span>
<span class="t r" style="top:294px;left:259px;transform:translate(0.9px,0) scaleX(0.830);">1</span>
<span class="t r" style="top:294px;left:286px;transform:translate(0.95px,0) scaleX(0.830);">1</span>
<span class="t r" style="top:294px;left:314px;transform:translate(0px,0) scaleX(0.830);">1</span>
<span class="t" style="top:294px;left:793px;transform:translate(0.1px,0) scaleX(0.754);">1-6</span>
<span class="t" style="top:294px;left:836px;transform:translate(0.7px,0) scaleX(0.754);">1-6</span>
<span class="t" style="top:294px;left:879px;transform:translate(0.1px,0) scaleX(0.860);">Wort</span>
<span class="t" style="top:294px;left:615px;transform:translate(0.8px,0) scaleX(0.842);">Produkte und gastorientierte Dienstleistungen</span>
<span class="t r" style="top:305px;left:-268px;transform:translate(0.8px,0) scaleX(0.830);">4</span>
<span class="t" style="top:305px;left:34px;transform:translate(0.6px,0) scaleX(0.826);">Fach</span>
<span class="t" style="top:305px;left:173px;transform:translate(0.1px,0) scaleX(0.855);">Marketing/Arbeitsorg.</span>
<span class="t" style="top:305px;left:343px;transform:translate(0.3px,0) scaleX(0.887);">Pflichtunt</span>
<span class="t r" style="top:305px;left:232px;transform:translate(0.85px,0) scaleX(0.830);">1</span>
<span class="t r" style="top:305px;left:259px;transform:translate(0.9px,0) scaleX(0.830);">1</span>
<span class="t r" style="top:305px;left:286px;transform:translate(0.95px,0) scaleX(0.830);">1</span>
<span class="t r" style="top:305px;left:314px;transform:translate(0px,0) scaleX(0.830);">1</span>
<span class="t" style="top:305px;left:793px;transform:translate(0.1px,0) scaleX(0.754);">1-6</span>
<span class="t" style="top:305px;left:836px;transform:translate(0.7px,0) scaleX(0.754);">1-6</span>
<span class="t" style="top:305px;left:879px;transform:translate(0.1px,0) scaleX(0.860);">Wort</span>
<span class="t" style="top:305px;left:615px;transform:translate(0.8px,0) scaleX(0.843);">Marketing und Arbeitsorganisation</span>
<span class="t r" style="top:348px;left:-268px;transform:translate(0.8px,0) scaleX(0.830);">8</span>
<span class="t" style="top:348px;left:34px;transform:translate(0.6px,0) scaleX(0.826);">Fach</span>
<span class="t" style="top:348px;left:173px;transform:translate(0.1px,0) scaleX(0.832);">Computeranwendung</span>
<span class="t" style="top:348px;left:343px;transform:translate(0.3px,0) scaleX(0.889);">Wahlpflichtunt</span>
<span class="t r" style="top:348px;left:232px;transform:translate(0.85px,0) scaleX(0.830);">1</span>
<span class="t r" style="top:348px;left:259px;transform:translate(0.9px,0) scaleX(0.830);">1</span>
<span class="t r" style="top:348px;left:286px;transform:translate(0.95px,0) scaleX(0.830);">1</span>
<span class="t r" style="top:348px;left:314px;transform:translate(0px,0) scaleX(0.830);">1</span>
<span class="t" style="top:348px;left:793px;transform:translate(0.1px,0) scaleX(0.754);">1-6</span>
<span class="t" style="top:348px;left:836px;transform:translate(0.7px,0) scaleX(0.754);">1-6</span>
<span class="t" style="top:348px;left:879px;transform:translate(0.1px,0) scaleX(0.860);">Wort</span>
<span class="t" style="top:348px;left:615px;transform:translate(0.8px,0) scaleX(0.839);">Computeranwendung *</span>
<span class="t r" style="top:359px;left:-268px;transform:translate(0.8px,0) scaleX(0.830);">9</span>
<span class="t" style="top:359px;left:34px;transform:translate(0.6px,0) scaleX(0.826);">Fach</span>
<span class="t" style="top:359px;left:173px;transform:translate(0.1px,0) scaleX(0.811);">Englisch</span>
<span class="t" style="top:359px;left:343px;transform:translate(0.3px,0) scaleX(0.889);">Wahlpflichtunt</span>
<span class="t r" style="top:359px;left:232px;transform:translate(0.85px,0) scaleX(0.830);">1</span>
<span class="t r" style="top:359px;left:259px;transform:translate(0.9px,0) scaleX(0.830);">1</span>
<span class="t r" style="top:359px;left:286px;transform:translate(0.95px,0) scaleX(0.830);">1</span>
<span class="t r" style="top:359px;left:314px;transform:translate(0px,0) scaleX(0.830);">1</span>
<span class="t" style="top:359px;left:793px;transform:translate(0.1px,0) scaleX(0.754);">1-6</span>
<span class="t" style="top:359px;left:836px;transform:translate(0.7px,0) scaleX(0.754);">1-6</span>
<span class="t" style="top:359px;left:879px;transform:translate(0.1px,0) scaleX(0.860);">Wort</span>
<span class="t" style="top:359px;left:615px;transform:translate(0.8px,0) scaleX(0.811);">Englisch</span>
<span class="t r" style="top:402px;left:-268px;transform:translate(0.8px,0) scaleX(0.830);">13</span>
<span class="t" style="top:402px;left:34px;transform:translate(0.6px,0) scaleX(0.879);">wiederholt</span>
<span class="t" style="top:402px;left:173px;transform:translate(0.1px,0) scaleX(0.879);">wiederholt</span>
<span class="t" style="top:402px;left:615px;transform:translate(0.8px,0) scaleX(0.879);">wiederholt</span>
<span class="t r" style="top:413px;left:-268px;transform:translate(0.8px,0) scaleX(0.830);">14</span>
<span class="t" style="top:413px;left:34px;transform:translate(0.6px,0) scaleX(0.830);">bestanden</span>
<span class="t" style="top:413px;left:173px;transform:translate(0.1px,0) scaleX(0.830);">bestanden</span>
<span class="t" style="top:413px;left:615px;transform:translate(0.8px,0) scaleX(0.830);">bestanden</span>
<span class="t r" style="top:456px;left:-268px;transform:translate(0.8px,0) scaleX(0.830);">18</span>
<span class="t" style="top:456px;left:34px;transform:translate(0.6px,0) scaleX(0.833);">Durchschnitt 1</span>
<span class="t" style="top:456px;left:173px;transform:translate(0.1px,0) scaleX(0.811);">Lob / Preis</span>
<span class="t" style="top:456px;left:615px;transform:translate(0.8px,0) scaleX(0.833);">Durchschnitt 1</span>
<span class="t r" style="top:467px;left:-268px;transform:translate(0.8px,0) scaleX(0.830);">19</span>
<span class="t" style="top:467px;left:34px;transform:translate(0.6px,0) scaleX(0.833);">Durchschnitt 3</span>
<span class="t" style="top:467px;left:173px;transform:translate(0.1px,0) scaleX(0.833);">Durchschnitt 3</span>
<span class="t" style="top:467px;left:615px;transform:translate(0.8px,0) scaleX(0.833);">Durchschnitt 3</span>
</div>
</div></body></html>
